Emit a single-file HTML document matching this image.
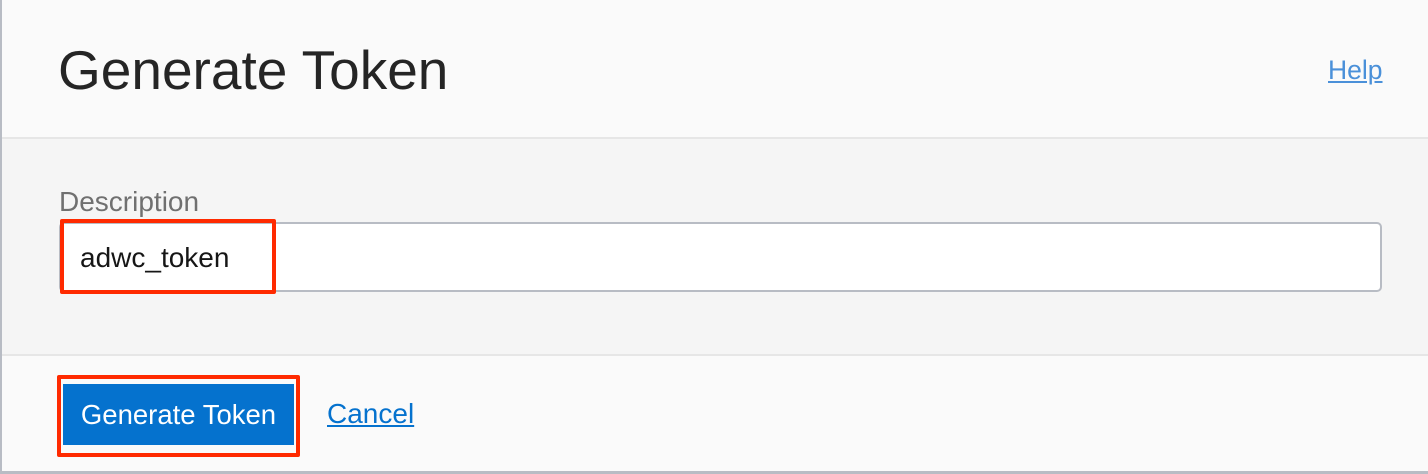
<!DOCTYPE html>
<html><head><style>
*{margin:0;padding:0;box-sizing:border-box}
body{width:1428px;height:474px;background:#fafafa;font-family:"Liberation Sans",sans-serif;position:relative;overflow:hidden}
.l{position:absolute;left:0;top:0;width:2px;height:474px;background:#b8bcc4}
.b{position:absolute;left:0;top:471px;width:1428px;height:3px;background:#b8bcc4}
div{white-space:nowrap}
.h1{position:absolute;left:58px;top:38px;font-size:55px;color:#252525}
.help{position:absolute;left:1328px;top:55px;font-size:26.5px;color:#4a90d9;text-decoration:underline}
.mid{position:absolute;left:2px;top:137px;width:1426px;height:219px;background:#f5f5f5;border-top:2px solid #e6e6e6;border-bottom:2px solid #e6e6e6}
.lab{position:absolute;left:59px;top:186px;font-size:28px;color:#707070}
.inp{position:absolute;left:59px;top:222px;width:1323px;height:70px;background:#fff;border:2px solid #b8bcc4;border-radius:5px}
.r1{position:absolute;left:60px;top:219px;width:216px;height:75px;border:4px solid #ff2a00;border-radius:2px}
.val{position:absolute;left:80px;top:242px;font-size:28px;color:#161616}
.r2{position:absolute;left:57px;top:375px;width:243px;height:82px;border:4px solid #ff2a00;border-radius:2px}
.btn{position:absolute;left:63px;top:384px;width:231px;height:61px;background:#0572ce;color:#fff;font-size:27.5px;text-align:center;line-height:61px}
.can{position:absolute;left:327px;top:398px;font-size:28px;color:#0572ce;text-decoration:underline}
</style></head><body>
<div class="l"></div>
<div class="h1">Generate Token</div>
<div class="help">Help</div>
<div class="mid"></div>
<div class="lab">Description</div>
<div class="inp"></div>
<div class="r1"></div>
<div class="val">adwc_token</div>
<div class="r2"></div>
<div class="btn">Generate Token</div>
<div class="can">Cancel</div>
<div class="b"></div>
</body></html>
